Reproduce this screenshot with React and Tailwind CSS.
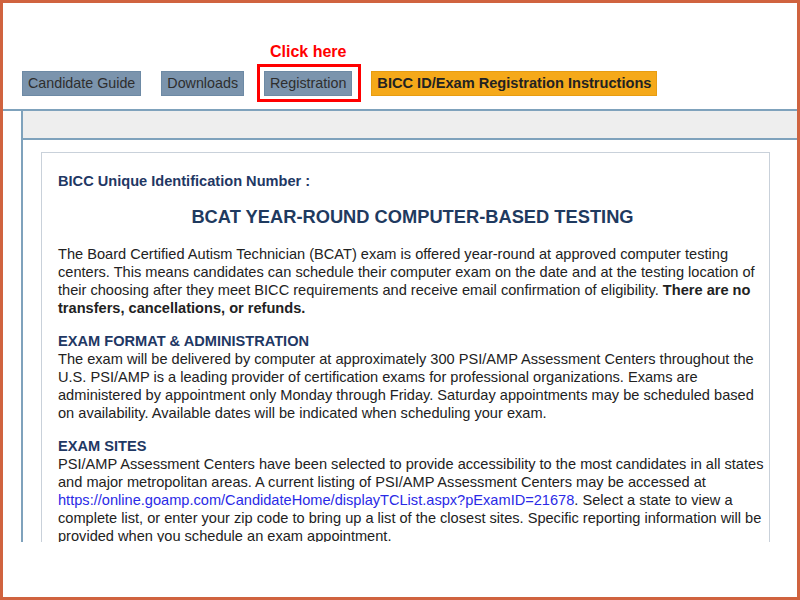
const tabs = [
  { label: "Candidate Guide" },
  { label: "Downloads" },
  { label: "Registration", marked: true },
];

const App = () => {
  return (
    <div className="w-[800px] h-[600px] border-[3px] border-[#d0633f] bg-white overflow-hidden font-['Liberation_Sans',Arial,sans-serif]">
      {/* tab row */}
      <div className="flex items-start gap-[20px] pl-[19px] pt-[68px] h-[106px]">
        {tabs.map((tab) => (
          <div key={tab.label} className="relative">
            {tab.marked && (
              <>
                <span className="absolute left-1/2 -translate-x-1/2 -top-[31px] text-[16px] font-bold text-[#ff0000] whitespace-nowrap">
                  Click here
                </span>
                <span className="absolute -left-[7px] -right-[9px] -top-[7px] -bottom-[6px] border-[3px] border-[#ff0000]" />
              </>
            )}
            <div className="h-[25px] px-[5px] flex items-center bg-[#7b94ad] border border-[#6d8aa5] text-[14.3px] text-[#2e2e2e]">
              {tab.label}
            </div>
          </div>
        ))}
        <div className="h-[25px] px-[5px] -ml-[1px] flex items-center bg-[#f5a91a] border border-[#e79d12] text-[14.6px] font-bold text-[#222]">
          BICC ID/Exam Registration Instructions
        </div>
      </div>

      {/* page body */}
      <div className="h-[433px] overflow-hidden border-t-2 border-[#7fa2bc]">
        <div className="ml-[18px] h-full border-l-2 border-[#7fa2bc]">
          <div className="h-[29px] bg-[#eeeeee] border-b-2 border-[#7fa2bc]" />
          <div className="pt-[12px] pl-[18px] pr-[27px]">
            <div className="border border-[#c9d1da] pt-[19px] pl-[16px] pr-[2px] pb-[20px] text-[14.6px] leading-[18px] text-[#222]">
              <p className="font-bold text-[#1f3864]">BICC Unique Identification Number :</p>
              <h1 className="mt-[16px] text-center text-[18.3px] leading-[22px] font-bold text-[#1f3a5f]">
                BCAT YEAR-ROUND COMPUTER-BASED TESTING
              </h1>
              <p className="mt-[17px]">
                The Board Certified Autism Technician (BCAT) exam is offered year-round at approved computer testing
                centers. This means candidates can schedule their computer exam on the date and at the testing location of
                their choosing after they meet BICC requirements and receive email confirmation of eligibility.{" "}
                <b>There are no transfers, cancellations, or refunds.</b>
              </p>

              <h2 className="mt-[15px] font-bold text-[#1f3864]">EXAM FORMAT &amp; ADMINISTRATION</h2>
              <p>
                The exam will be delivered by computer at approximately 300 PSI/AMP Assessment Centers throughout the
                U.S. PSI/AMP is a leading provider of certification exams for professional organizations. Exams are
                administered by appointment only Monday through Friday. Saturday appointments may be scheduled based
                on availability. Available dates will be indicated when scheduling your exam.
              </p>

              <h2 className="mt-[15px] font-bold text-[#1f3864]">EXAM SITES</h2>
              <p>
                PSI/AMP Assessment Centers have been selected to provide accessibility to the most candidates in all states
                and major metropolitan areas. A current listing of PSI/AMP Assessment Centers may be accessed at{" "}
                <a href="#" className="text-[#2a2ae6]">
                  https://online.goamp.com/CandidateHome/displayTCList.aspx?pExamID=21678
                </a>
                . Select a state to view a complete list, or enter your zip code to bring up a list of the closest sites.
                Specific reporting information will be provided when you schedule an exam appointment.
              </p>
            </div>
          </div>
        </div>
      </div>
    </div>
  );
};

export default App;
